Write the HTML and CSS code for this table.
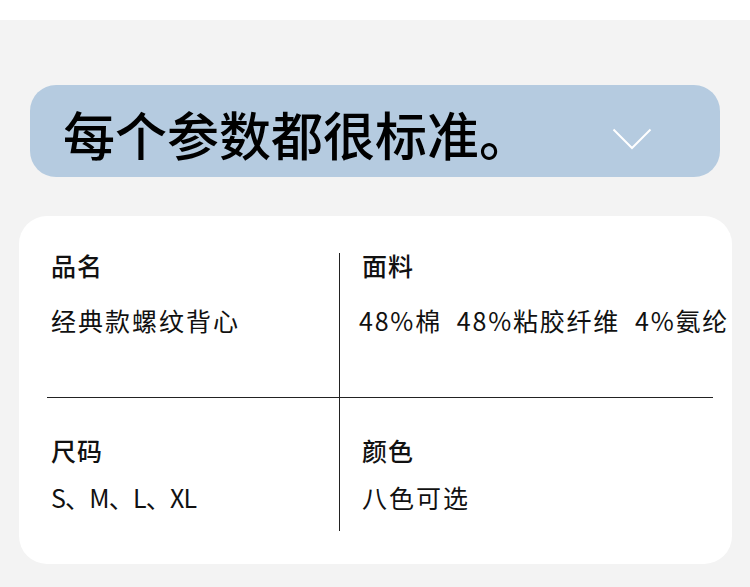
FILE: index.html
```html
<!DOCTYPE html>
<html lang="zh-CN">
<head>
<meta charset="utf-8">
<link rel="stylesheet" href="styles.css">
</head>
<body>
<div class="top-strip"></div>
<main class="page">
  <div class="banner">
    <h1 class="banner-title">每个参数都很标准。</h1>
    <svg class="chevron" width="40" height="22" viewBox="0 0 40 22"><polyline points="1.5,1.5 20,20 38.5,1.5" fill="none" stroke="#ffffff" stroke-width="2"/></svg>
  </div>
  <section class="card">
    <div class="specs">
      <div class="cell cell-top cell-left">
        <div class="label">品名</div>
        <div class="value value-top">经典款螺纹背心</div>
      </div>
      <div class="cell cell-top cell-right">
        <div class="label">面料</div>
        <div class="value value-top value-wide">48%棉&nbsp;&nbsp;48%粘胶纤维&nbsp;&nbsp;4%氨纶</div>
      </div>
      <div class="cell cell-bottom cell-left">
        <div class="label">尺码</div>
        <div class="value value-bottom value-size">S、M、L、XL</div>
      </div>
      <div class="cell cell-bottom cell-right">
        <div class="label">颜色</div>
        <div class="value value-bottom">八色可选</div>
      </div>
    </div>
  </section>
</main>
</body>
</html>
```

FILE: styles.css
```css
* { box-sizing: border-box; }
html, body { margin: 0; padding: 0; }
body {
  width: 750px;
  height: 587px;
  overflow: hidden;
  background: #f3f3f3;
  font-family: "Noto Sans CJK SC", "Noto Sans", sans-serif;
  color: #111111;
}
.top-strip {
  height: 20px;
  background: #ffffff;
}
.page {
  padding: 65px 18px 0 19px;
}
.banner {
  margin-left: 11px;
  width: 690px;
  height: 92px;
  background: #b5cbe0;
  border-radius: 26px;
  display: flex;
  align-items: center;
  justify-content: space-between;
  padding: 0 68px 0 33px;
}
.banner-title {
  margin: 0;
  font-size: 52px;
  font-weight: 500;
  line-height: 60px;
  color: #000000;
  letter-spacing: 0;
  position: relative;
  top: 3px;
}
.chevron {
  display: block;
  margin-top: 16px;
}
.card {
  margin-top: 39px;
  width: 713px;
  height: 348px;
  background: #ffffff;
  border-radius: 28px;
  padding: 37px 19px 0 28px;
}
.specs {
  display: grid;
  grid-template-columns: 292px minmax(0, 1fr);
  grid-template-rows: 145px 133px;
}
.cell {
  min-width: 0;
}
.cell-top {
  border-bottom: 1px solid #222222;
}
.cell-right {
  border-left: 1px solid #222222;
  padding-left: 22px;
}
.cell-left {
  padding-left: 4px;
}
.cell-bottom {
  padding-top: 40px;
}
.label {
  font-size: 25px;
  line-height: 24px;
  font-weight: 500;
  letter-spacing: 1px;
}
.value {
  font-size: 25px;
  line-height: 24px;
  font-weight: 400;
  letter-spacing: 2px;
  white-space: nowrap;
}
.value-top { margin-top: 31px; }
.value-bottom { margin-top: 23px; }
.value-wide { letter-spacing: 1.8px; margin-left: -3px; }
.value-size { letter-spacing: -0.8px; }
```
